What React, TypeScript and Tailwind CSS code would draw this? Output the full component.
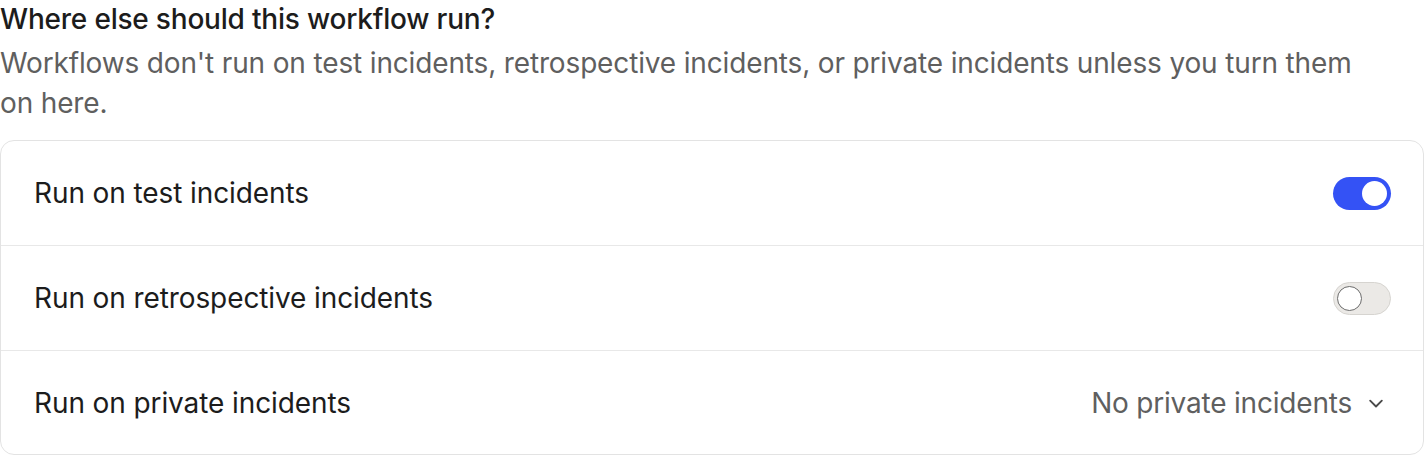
import React from "react";

function Toggle({ on }: { on: boolean }) {
  return on ? (
    <div className="w-[58px] h-[33px] rounded-full bg-[#3452f5] flex items-center justify-end p-[4px]">
      <div className="w-[25px] h-[25px] rounded-full bg-white" />
    </div>
  ) : (
    <div className="w-[58px] h-[33px] rounded-full bg-[#ebe9e6] border border-[#d6d4d0] flex items-center justify-start p-[3px]">
      <div className="w-[25px] h-[25px] rounded-full bg-white border border-[#6b6b6b]" />
    </div>
  );
}

export default function App() {
  return (
    <div className="w-[1424px] h-[456px] bg-white text-[#1c1c1c]" style={{ fontFamily: "Inter, 'Noto Sans', sans-serif" }}>
      <h2 className="text-[28px] leading-[38px] font-medium tracking-[-0.2px]">Where else should this workflow run?</h2>
      <p className="text-[28px] leading-[40px] text-[#5f5f5f] w-[1370px] mt-[5px] tracking-[-0.15px]">
        Workflows don't run on test incidents, retrospective incidents, or private incidents unless you turn them on here.
      </p>
      <div className="mt-[17px] border border-[#e3e3e3] rounded-[14px] flex flex-col">
        <div className="h-[105px] flex items-center justify-between pl-[33px] pr-[32px] border-b border-[#e8e8e8]">
          <span className="text-[28px] tracking-[-0.1px]">Run on test incidents</span>
          <Toggle on />
        </div>
        <div className="h-[105px] flex items-center justify-between pl-[33px] pr-[32px] border-b border-[#e8e8e8]">
          <span className="text-[28px] tracking-[-0.1px]">Run on retrospective incidents</span>
          <Toggle on={false} />
        </div>
        <div className="h-[103px] flex items-center justify-between pl-[33px] pr-[33px]">
          <span className="text-[28px] tracking-[-0.1px]">Run on private incidents</span>
          <div className="flex items-center gap-[10px] text-[#5f5f5f] text-[28px] tracking-[-0.2px]">
            <span>No private incidents</span>
            <svg width="28" height="28" viewBox="0 0 24 24" fill="none" stroke="#4a4a4a" strokeWidth="1.6" strokeLinecap="round" strokeLinejoin="round">
              <path d="M7 10l5 5 5-5" />
            </svg>
          </div>
        </div>
      </div>
    </div>
  );
}
